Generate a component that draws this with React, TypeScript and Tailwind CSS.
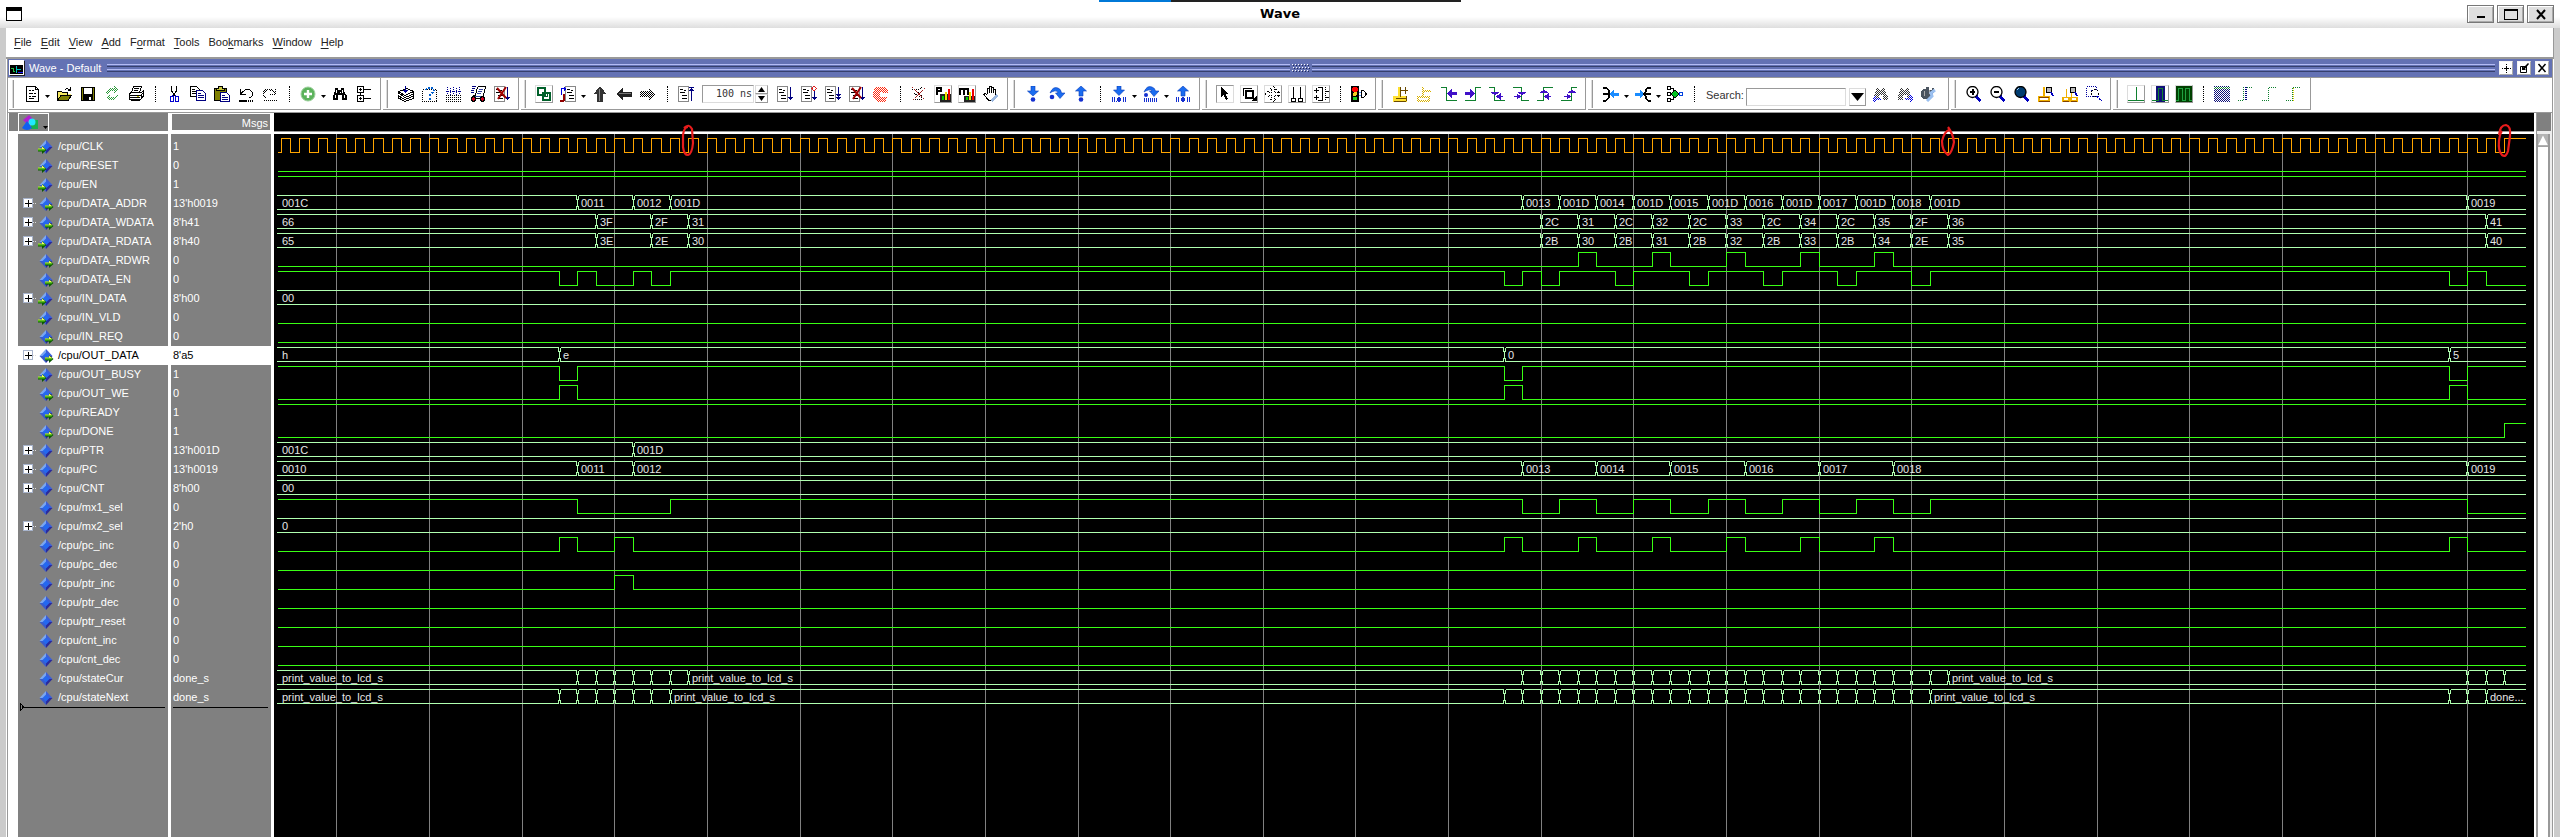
import React from "react";
import type { ReactNode } from "react";

/* ---------- waveform data ---------- */

type Change = [number, string];
type Port = "in" | "out" | "none";
type Signal = {
  name: string;
  value: string;
  port: Port;
  kind: "clock" | "bit" | "bus";
  initial?: 0 | 1;
  toggles?: number[];
  first?: string;
  changes?: Change[];
};

const range = (from: number, to: number) =>
  Array.from({ length: to - from + 1 }, (_, i) => from + i);

const blanks = (from: number, to: number): Change[] => range(from, to).map((k) => [k, ""]);

const memoryTimes = [14, 17, 19, 65, 67, 69, 71, 73, 75, 77, 79, 81, 83, 85, 87, 116];
const at = (times: number[], labels: string): Change[] =>
  labels.split(" ").map((label, i) => [times[i], label]);

const bit = (name: string, value: string, port: Port, initial: 0 | 1, toggles: number[] = []): Signal => ({
  name, value, port, kind: "bit", initial, toggles,
});
const bus = (name: string, value: string, port: Port, first: string, changes: Change[] = []): Signal => ({
  name, value, port, kind: "bus", first, changes,
});

const signals: Signal[] = [
  { name: "/cpu/CLK", value: "1", port: "in", kind: "clock" },
  bit("/cpu/RESET", "0", "in", 0),
  bit("/cpu/EN", "1", "in", 1),
  bus("/cpu/DATA_ADDR", "13'h0019", "out", "001C",
    at([13, 16, 18, 64, 66, 68, 70, 72, 74, 76, 78, 80, 82, 84, 86, 115],
      "0011 0012 001D 0013 001D 0014 001D 0015 001D 0016 001D 0017 001D 0018 001D 0019")),
  bus("/cpu/DATA_WDATA", "8'h41", "out", "66", at(memoryTimes, "3F 2F 31 2C 31 2C 32 2C 33 2C 34 2C 35 2F 36 41")),
  bus("/cpu/DATA_RDATA", "8'h40", "in", "65", at(memoryTimes, "3E 2E 30 2B 30 2B 31 2B 32 2B 33 2B 34 2E 35 40")),
  bit("/cpu/DATA_RDWR", "0", "out", 0, [67, 68, 71, 72, 75, 76, 79, 80, 83, 84]),
  bit("/cpu/DATA_EN", "0", "out", 1,
    [12, 13, 14, 16, 17, 18, 63, 64, 65, 66, 69, 70, 73, 74, 77, 78, 81, 82, 85, 86, 114, 115, 116]),
  bus("/cpu/IN_DATA", "8'h00", "in", "00"),
  bit("/cpu/IN_VLD", "0", "in", 0),
  bit("/cpu/IN_REQ", "0", "out", 0),
  bus("/cpu/OUT_DATA", "8'a5", "out", "h", [[12, "e"], [63, "0"], [114, "5"]]),
  bit("/cpu/OUT_BUSY", "1", "in", 1, [12, 13, 63, 64, 114, 115]),
  bit("/cpu/OUT_WE", "0", "out", 0, [12, 13, 63, 64, 114, 115]),
  bit("/cpu/READY", "1", "out", 1),
  bit("/cpu/DONE", "1", "out", 0, [117]),
  bus("/cpu/PTR", "13'h001D", "none", "001C", [[16, "001D"]]),
  bus("/cpu/PC", "13'h0019", "none", "0010",
    at([13, 16, 64, 68, 72, 76, 80, 84, 115], "0011 0012 0013 0014 0015 0016 0017 0018 0019")),
  bus("/cpu/CNT", "8'h00", "none", "00"),
  bit("/cpu/mx1_sel", "0", "none", 1, [13, 18, 64, 66, 68, 70, 72, 74, 76, 78, 80, 82, 84, 86, 115]),
  bus("/cpu/mx2_sel", "2'h0", "none", "0"),
  bit("/cpu/pc_inc", "0", "none", 0, [12, 13, 15, 16, 63, 64, 67, 68, 71, 72, 75, 76, 79, 80, 83, 84, 114, 115]),
  bit("/cpu/pc_dec", "0", "none", 0),
  bit("/cpu/ptr_inc", "0", "none", 0, [15, 16]),
  bit("/cpu/ptr_dec", "0", "none", 0),
  bit("/cpu/ptr_reset", "0", "none", 0),
  bit("/cpu/cnt_inc", "0", "none", 0),
  bit("/cpu/cnt_dec", "0", "none", 0),
  bus("/cpu/stateCur", "done_s", "none", "print_value_to_lcd_s", [
    ...blanks(13, 18), [19, "print_value_to_lcd_s"], ...blanks(64, 86), [87, "print_value_to_lcd_s"], ...blanks(115, 117),
  ]),
  bus("/cpu/stateNext", "done_s", "none", "print_value_to_lcd_s", [
    ...blanks(12, 17), [18, "print_value_to_lcd_s"], ...blanks(63, 85), [86, "print_value_to_lcd_s"], ...blanks(114, 115), [116, "done..."],
  ]),
];

const selected = "/cpu/OUT_DATA";
const expandable = (s: Signal) => s.kind === "bus" && !s.name.includes("state");

/* ---------- waveform drawing ---------- */

const PERIOD = 18.53;
const ORIGIN = 62.3;
const START = 4;
const END = 2252;
const ROW = 19;
const timeX = (k: number) => Math.round(ORIGIN + PERIOD * k);

function bitPath(row: number, initial: number, toggles: number[]) {
  const y = (level: number) => 4.5 + row * ROW + (level ? 0 : 14);
  let level = initial;
  let d = `M${START} ${y(level)}`;
  toggles.forEach((k) => {
    d += `H${timeX(k) + 0.5}`;
    level = level ? 0 : 1;
    d += `V${y(level)}`;
  });
  return d + `H${END}`;
}

function busPath(row: number, changes: Change[]) {
  const top = 4.5 + row * ROW;
  const low = top + 14;
  let from = START - 1;
  let d = "";
  changes.forEach(([k]) => {
    const x = timeX(k) + 0.5;
    d += `M${from} ${top}H${x - 1}V${top + 4}M${from} ${low}H${x - 1}V${low - 4}`;
    d += `M${x} ${top + 3}V${low - 3}M${x + 1} ${top + 4}V${top}M${x + 1} ${low - 4}V${low}`;
    from = x + 1;
  });
  return d + `M${from} ${top}H${END}M${from} ${low}H${END}`;
}

function Waves() {
  const clock = range(-6, 234).map((h) => h / 2).filter((k) => timeX(k) > START && timeX(k) < END);
  return (
    <svg className="block h-full w-full" role="img" aria-label="Waveforms">
      <g shapeRendering="crispEdges" fill="none" strokeWidth="1">
        <g stroke="#808080">
          {range(0, 23).map((n) => (
            <line key={n} x1={timeX(n * 5) + 0.5} x2={timeX(n * 5) + 0.5} y1="0" y2="100%" />
          ))}
        </g>
        {signals.map((s, row) => {
          if (s.kind === "clock") return <path key={s.name} stroke="#ffa500" d={bitPath(row, 0, clock)} />;
          if (s.kind === "bit") return <path key={s.name} stroke="#39ff14" d={bitPath(row, s.initial ?? 0, s.toggles ?? [])} />;
          return <path key={s.name} stroke="#b0ffb0" d={busPath(row, s.changes ?? [])} />;
        })}
      </g>
      <g fill="#e6e6e6" className="text-[11px]">
        {signals.map((s, row) =>
          s.kind === "bus" ? (
            <g key={s.name}>
              <text x={START + 4} y={16 + row * ROW}>{s.first}</text>
              {(s.changes ?? []).filter((c) => c[1]).map(([k, label]) => (
                <text key={k} x={timeX(k) + 4} y={16 + row * ROW}>{label}</text>
              ))}
            </g>
          ) : null,
        )}
      </g>
    </svg>
  );
}

/* ---------- icons ---------- */

const Icon = ({ children, dim }: { children: ReactNode; dim?: boolean }) => (
  <svg viewBox="0 0 16 16" className="size-4 shrink-0" shapeRendering="crispEdges" fill="none" stroke="#000" aria-hidden="true">
    {dim ? <g mask="url(#checker)">{children}</g> : children}
  </svg>
);

const Page = ({ x = 0 }: { x?: number }) => (
  <g transform={`translate(${x} 0)`}>
    <path d="M.5 .5H10.5V15.5H.5Z" fill="#fff" stroke="#888" />
    <path d="M2 3.5H5M2 6.5H7M4 9.5H9M4 12.5H9M6 4.5H8" />
  </g>
);
const ArrowDown = ({ x = 13 }: { x?: number }) => (
  <path d={`M${x + 0.5} 1V14M${x - 2} 11.5H${x + 3}M${x - 1} 12.5H${x + 2}M${x} 13.5H${x + 1}`} stroke="#000080" />
);
const Cross = () => <path d="M3 2L12 12M12 1L4 13" stroke="#a00000" strokeWidth="2" shapeRendering="auto" />;
const binocularShape = "M3 2H6V4H9V2H12V5L15 10V14H10V9H6V14H1V10L3 5Z";

const icons = {
  doc: <Icon><path d="M2.5 .5H11.5L14.5 3.5V15.5H2.5Z" fill="#fff" /><path d="M11.5 1V3.5H14M5 4.5H7M8 4.5H10M5 7.5H9M10 7.5H12M5 10.5H7M8 10.5H12M5 12.5H10" /></Icon>,
  open: <Icon><path d="M1 5H5L6 6H11V8H15L11 14H1Z" fill="#f5e960" stroke="none" /><path d="M1.5 13.5V5.5H5.5L6.5 6.5H11.5V9" /><path d="M1.5 14.5L5 9.5H15.5L12 14.5Z" fill="#808000" /><path d="M9 3.5H10M10 2.5H12M12 3.5H14M14.5 1V5M12 4.5H15" /></Icon>,
  save: <Icon><path d="M1.5 1.5H14.5V14.5H1.5Z" fill="#808000" /><path d="M4 2H12V8H4Z" fill="#fff" stroke="none" /><path d="M3 9H13V15H3Z" fill="#000" stroke="none" /><path d="M9 11H11V14H9Z" fill="#fff" stroke="none" /><path d="M3.5 2V8.5H12.5V2" /></Icon>,
  refresh: <Icon dim><path d="M1 6L5 2H10V0L14 4L10 8V5H6L4 8ZM15 9L11 14H6V16L2 12L6 8V11H10L12 9Z" fill="#2c9a3a" stroke="none" /></Icon>,
  print: <Icon><path d="M5.5 .5H13.5L11.5 6.5H3.5Z" fill="#fff" /><path d="M6 2.5H11M5.5 4.5H10" /><path d="M1.5 7.5L3.5 6.5H13.5L15.5 5V10L12.5 13.5H1.5Z" fill="#fff" /><path d="M2 9.5H13L15 7M2 11.5H12M3 14.5H12M13.5 9V13" /><path d="M9 10.5H11" stroke="#c8c800" /></Icon>,
  cut: <Icon><path d="M5.5 0V5L9.5 10M10.5 0V5L6.5 10" /><path d="M6.5 8.5V10.5H4.5V15.5H7.5V10M9.5 8.5V10.5M9 10.5H12.5V15.5H9.5V10" stroke="#0000d0" /></Icon>,
  copy: <Icon><path d="M.5 .5H6.5L9.5 3.5V10.5H.5Z" fill="#fff" /><path d="M2 3.5H5M2 5.5H7M2 7.5H7" /><path d="M6.5 4.5H12.5L15.5 7.5V14.5H6.5Z" fill="#fff" stroke="#000080" /><path d="M8 7.5H11M8 9.5H14M8 11.5H14" stroke="#000080" /></Icon>,
  paste: <Icon><path d="M.5 2.5H12.5V14.5H.5Z" fill="#808000" /><path d="M4.5 .5H8.5V2.5H10.5V4.5H2.5V2.5H4.5Z" fill="#c8c840" /><path d="M6.5 6.5H12.5L15.5 9.5V15.5H6.5Z" fill="#fff" stroke="#000080" /><path d="M8 9.5H11M8 11.5H14M8 13.5H14" stroke="#000080" /></Icon>,
  undo: <Icon><path d="M2.5 3V8.5H8M3 7.5L7.5 3.5H11.5L14.5 6.5V9.5L11.5 12" /><path d="M1 14.5H9" strokeWidth="2" /><path d="M10 14.5H15" strokeDasharray="1 1" strokeWidth="2" /></Icon>,
  redo: <Icon dim><path d="M13.5 3V8.5H8M13 7.5L8.5 3.5H4.5L1.5 6.5V9.5L4.5 12M1 14.5H15" strokeWidth="1.6" /></Icon>,
  plus: <Icon><g shapeRendering="auto"><circle cx="8" cy="8" r="7" fill="#5cb35c" stroke="#9ccf9c" /><path d="M8 4V12M4 8H12" stroke="#fff" strokeWidth="2.4" /></g></Icon>,
  find: <Icon><path d={binocularShape} fill="#000" stroke="none" /><path d="M4.5 4V7M10.5 4V7M3.5 9V12M12.5 9V12M8 6V7" stroke="#fff" /></Icon>,
  tree: <Icon><path d="M1.5 .5H7.5V6.5H1.5ZM1.5 9.5H7.5V15.5H1.5ZM3 3.5H6M4.5 2V5M3 12.5H6M4.5 11V14M8 3.5H15M8 12.5H15M4.5 7V9" /></Icon>,
  layers: <Icon><path d="M.5 5.5L9 2.5L15.5 5.5L7 9.5Z" fill="#fff" /><path d="M.5 5.5V7L7 11.5L15.5 8V6M.5 9V10L7 13.5L15.5 10V9M.5 11V12L7 15.5L15.5 12.5V11" /><path d="M7.5 0V7M5 4.5H10M6 5.5H9M7 6.5H8" stroke="#000090" strokeWidth="1.4" /></Icon>,
  query: <Icon><path d="M.5 3.5H14.5V15.5H.5Z" strokeDasharray="1 1" /><path d="M4 4L5 2H10L11.5 4V6L8 9V11M8 12V15" stroke="#0060d0" strokeDasharray="2 1" strokeWidth="2" /></Icon>,
  grid: <Icon><path d="M1.5 1V8M4.5 2V9M7.5 1V8M10.5 2V9M13.5 1V8M0 5.5H15" stroke="#000090" strokeDasharray="1 1" /><path d="M0 9.5H15M0 11.5H15M0 13.5H15M0 15.5H15" strokeDasharray="1 1" /></Icon>,
  car: <Icon><path d="M2 .5H6M2 2.5H5M1 4.5H4M1 6.5H4" stroke="#000080" /><path d="M7.5 1.5L8.5 .5H15.5L13.5 9.5L14.5 12.5H1.5L3.5 9.5H5.5Z" fill="#fff" /><path d="M9 3.5H13M8 5.5H12M7 7.5H11M2 10.5H12" stroke="#3040a0" /><circle cx="3.5" cy="13" r="2.2" fill="#d00020" /><circle cx="12.5" cy="13" r="2.2" fill="#d00020" /></Icon>,
  pageCross: <Icon><Page /><ArrowDown /><Cross /></Icon>,
  squares: <Icon><path d="M2 2H9V9H2ZM7 7H14V14H7Z" stroke="#00602a" strokeWidth="2" /><path d="M6 6H11V10H6Z" stroke="#00602a" /></Icon>,
  restart: <Icon><Page x={5} /><path d="M1.5 9V2.5H5M4 .5V5M5.5 1.5V4" stroke="#0000e0" /><path d="M3.5 8V15M0 14.5H4M3 8.5H5" stroke="#900000" strokeWidth="2" /></Icon>,
  up: <Icon><path d="M8 0L14.5 8H11V16H5V8H1.5Z" fill="#333" stroke="none" /><path d="M7 3V15" stroke="#888" /></Icon>,
  left: <Icon><path d="M0 8L7 2V5.5H16V10.5H7V14Z" fill="#222" stroke="none" /><path d="M3 7.5H15" stroke="#777" /></Icon>,
  right: <Icon dim><path d="M16 8L9 2V5H0V11H9V14Z" fill="#000" stroke="none" /></Icon>,
  runUp: <Icon><Page /><path d="M13.5 1V15M11 1.5H16M11 4.5H16M12 3.5H15" stroke="#000080" /></Icon>,
  run: <Icon><Page /><ArrowDown /></Icon>,
  runNext: <Icon><Page /><ArrowDown /><path d="M13 0L15.5 2.5L13 5L11 2.5Z" fill="#fff" stroke="#e02020" /></Icon>,
  runAll: <Icon><Page /><ArrowDown /><path d="M11 8.5H16M12 9.5H15" stroke="#000080" /></Icon>,
  stop: <Icon dim><path d="M4 1H11L14 4V6H9L8 5L6 7V9L8 11H14L12 15H5L1 11V5Z" fill="#ff2a10" stroke="#ff2a10" /></Icon>,
  profileOff: <Icon><path d="M1 3.5H8L12 1M3 7L7 10L12 11M2 13.5H12M5 5L10 9V14" strokeDasharray="1 1" /><path d="M1 1L14 14M14 2L1 15" stroke="#a02020" strokeDasharray="2 1" /></Icon>,
  profileP: <Icon><path d="M5 8H16V16H5Z" fill="#222" stroke="none" /><path d="M7 10H9V14H7Z" fill="#00d000" stroke="none" /><path d="M9.5 6H12V14H9.5Z" fill="#f0e000" stroke="none" /><path d="M12.5 3H15V14H12.5Z" fill="#f00000" stroke="none" /><path d="M2 9V2H6V5H2" strokeWidth="2" /></Icon>,
  profileM: <Icon><path d="M5 10H16V16H5Z" fill="#222" stroke="none" /><path d="M7 11H9V14H7Z" fill="#00d000" stroke="none" /><path d="M9.5 6H12V14H9.5Z" fill="#f0e000" stroke="none" /><path d="M12.5 3H15V14H12.5Z" fill="#f00000" stroke="none" /><path d="M1 9V3H5V9M5 3H9V9" strokeWidth="2" /></Icon>,
  hand: <Icon><path d="M4.5 8V2.5H6.5V7V.5H8.5V7V1.5H10.5V7V3.5H12.5V10L10 14.5H6L.5 8.5L2.5 7.5L4.5 9.5" fill="#fff" /><path d="M13 8L15 10L9 16L7 14Z" fill="#9bb8e0" stroke="none" /></Icon>,
  stepIn: <Icon><path d="M6 0H10V5H13.5L8 10L2.5 5H6Z" fill="#1a6cf0" stroke="#0a3cb8" strokeWidth=".6" shapeRendering="auto" /><circle cx="8" cy="13.5" r="2.3" fill="#1530d0" stroke="none" shapeRendering="auto" /></Icon>,
  stepOver: <Icon><g shapeRendering="auto"><path d="M1 7Q4 0 9 2Q12 3 12.5 7H16L11 12.5L6.5 7H9Q8 4 5.5 5Q3 5.5 1 7Z" fill="#1a6cf0" stroke="#0a3cb8" strokeWidth=".6" /><circle cx="3" cy="11" r="2.3" fill="#1530d0" stroke="none" /></g></Icon>,
  stepOut: <Icon><path d="M6 10H10V5H13.5L8 0L2.5 5H6Z" fill="#1a6cf0" stroke="#0a3cb8" strokeWidth=".6" shapeRendering="auto" /><circle cx="8" cy="13.5" r="2.3" fill="#1530d0" stroke="none" shapeRendering="auto" /></Icon>,
  stepInCur: <Icon><path d="M6 0H10V4H13.5L8 9.5L2.5 4H6Z" fill="#1a6cf0" stroke="#0a3cb8" strokeWidth=".6" shapeRendering="auto" /><path d="M1.5 11V16M3.5 11V16M12.5 11V16M14.5 11V16M5.5 15V16" stroke="#1530d0" /><circle cx="8" cy="13.5" r="2.3" fill="#1530d0" stroke="none" /></Icon>,
  stepOverCur: <Icon><g shapeRendering="auto"><path d="M1 6Q4 -1 9 1Q12 2 12.5 5H16L11 10.5L6.5 5H9Q8 3 5.5 4Q3 4.5 1 6Z" fill="#1a6cf0" stroke="#0a3cb8" strokeWidth=".6" /><circle cx="3" cy="9" r="2" fill="#1530d0" stroke="none" /></g><path d="M1 14H15" stroke="#1530d0" strokeWidth="4" strokeDasharray="1 1" /></Icon>,
  stepOutCur: <Icon><path d="M6 10H10V5H13.5L8 0L2.5 5H6Z" fill="#1a6cf0" stroke="#0a3cb8" strokeWidth=".6" shapeRendering="auto" /><path d="M1.5 11V16M3.5 11V16M12.5 11V16M14.5 11V16" stroke="#1530d0" /><circle cx="8" cy="13.5" r="2.3" fill="#1530d0" stroke="none" /></Icon>,
  pointer: <Icon><path d="M4 1L4 11L6.5 9L9 14L11 13L8.5 8H12Z" fill="#000" stroke="none" /></Icon>,
  zoomMode: <Icon><path d="M2.5 10V2.5H11" /><path d="M5 5H12V12H5Z" strokeWidth="2" /><path d="M10 15H16V9Z" fill="#000" stroke="none" /></Icon>,
  pan: <Icon><path d="M8 0L11 3H9.5V6.5H13V5L16 8L13 11V9.5H9.5V13H11L8 16L5 13H6.5V9.5H3V11L0 8L3 5V6.5H6.5V3H5Z" strokeDasharray="1 1" /></Icon>,
  cursors: <Icon><path d="M4.5 1V12M11.5 1V12M2.5 12.5H6.5V15.5H2.5ZM9.5 12.5H13.5V15.5H9.5Z" /></Icon>,
  edit: <Icon><path d="M1 4.5H6M3.5 2V7M1 11.5H6M3.5 9V14M5 1.5H9.5V14.5H5" /><path d="M12.5 1V15" strokeDasharray="1 1" /><path d="M13 5.5H16M13 11.5H16" /></Icon>,
  traffic: <Icon><path d="M0 0H8V16H0Z" fill="#000" stroke="none" /><circle cx="4" cy="3.5" r="2.8" fill="#ff0000" stroke="none" /><circle cx="4" cy="8" r="2" fill="#f5d020" stroke="none" /><circle cx="4" cy="12.5" r="2" fill="#20d020" stroke="none" /><path d="M10.5 4.5H12.5L15.5 8L12.5 11.5H10.5Z" /><path d="M8 6.5H10M8 9.5H10" stroke="#60a0ff" /></Icon>,
  addCursor: <Icon><path d="M6.5 1V12M1.5 11.5H12.5V14.5H1.5Z" stroke="#ffe030" strokeWidth="3" /><path d="M7.5 1V11M2.5 12.5H12.5M1 15H13M13 10V15M8 4.5H15M12.5 1V8" stroke="#6b4a00" /></Icon>,
  removeCursor: <Icon dim><path d="M6 1V12M1 11H12V15H1ZM7 5H14" stroke="#d8b000" strokeWidth="2.5" /></Icon>,
  prevEdge: <Icon><path d="M0 1.5H5.5V14.5H16" stroke="#108030" /><path d="M7 7.5H16" stroke="#4010c8" strokeWidth="3" /><path d="M6 7.5L10.5 3V12Z" fill="#4010c8" stroke="none" /></Icon>,
  nextEdge: <Icon><path d="M0 14.5H10.5V1.5H16" stroke="#108030" /><path d="M0 7.5H7" stroke="#4010c8" strokeWidth="3" /><path d="M9.5 7.5L5 3V12Z" fill="#4010c8" stroke="none" /></Icon>,
  prevFall: <Icon><path d="M0 1.5H5.5V14.5H16" stroke="#108030" /><path d="M3 6.5H9L6 9ZM8 10.5L11 8V13ZM10 10.5H14" fill="#4010c8" stroke="#4010c8" /></Icon>,
  nextFall: <Icon><path d="M0 1.5H8.5V14.5H16" stroke="#108030" /><path d="M6 6.5H12L9 9ZM7 10.5L4 8V13ZM1 10.5H5" fill="#4010c8" stroke="#4010c8" /></Icon>,
  prevRise: <Icon><path d="M0 14.5H6.5V1.5H16" stroke="#108030" /><path d="M4 6.5H10L7 4ZM8 10.5L11 8V13ZM10 10.5H14" fill="#4010c8" stroke="#4010c8" /></Icon>,
  nextRise: <Icon><path d="M0 14.5H10.5V1.5H16" stroke="#108030" /><path d="M8 6.5H14L11 4ZM9 10.5L6 8V13ZM3 10.5H7" fill="#4010c8" stroke="#4010c8" /></Icon>,
  collapse: <Icon><path d="M0 1.5H3L5.5 4V6L7 8L5.5 10V12L3 14.5H0M0 8H6" strokeWidth="2" /><path d="M6 8L11 3.5V6.5H16V9.5H11V12.5Z" fill="#1a8cff" stroke="none" /></Icon>,
  expand: <Icon><path d="M0 6.5H5V3.5L10 8L5 12.5V9.5H0Z" fill="#1a8cff" stroke="none" /><path d="M16 1.5H13L10.5 4V6L9 8L10.5 10V12L13 14.5H16M10 8H16" strokeWidth="2" /></Icon>,
  expandAll: <Icon><path d="M.5 .5H3.5V3.5H.5ZM.5 6.5H3.5V9.5H.5ZM.5 12.5H3.5V15.5H.5ZM4 2.5H6.5V13.5H4M4 8H13" /><path d="M4 8L8 4L12 8L8 12Z" fill="#00c020" /><path d="M12.5 6.5H15.5V9.5H12.5Z" stroke="#0040e0" /></Icon>,
  findPrev: <Icon dim><path d={binocularShape} fill="#333" stroke="none" /><path d="M0 13H8M3 10L0 13L3 16" stroke="#0000e0" strokeWidth="2" /></Icon>,
  findNext: <Icon dim><path d={binocularShape} fill="#333" stroke="none" /><path d="M8 13H16M13 10L16 13L13 16" stroke="#0000e0" strokeWidth="2" /></Icon>,
  findOptions: <Icon><path d="M2 3H5V1H8V4H11V2H13V6L10 13H2L0 10V6Z" fill="#4b5560" stroke="none" /><path d="M3.5 5V10M8.5 4V8" stroke="#aaa" /><path d="M14 4L10 7L11 10L6 15" stroke="#9bc0f0" strokeWidth="3" shapeRendering="auto" /></Icon>,
  zoomIn: <Icon><path d="M10 10L14.5 15" stroke="#0000c0" strokeWidth="3" /><g shapeRendering="auto"><circle cx="6.500" cy="6" r="5.5" fill="#fff" strokeWidth="1.3" /></g><path d="M6.5 3V9M4 6H9" strokeWidth="2" /></Icon>,
  zoomOut: <Icon><path d="M10 10L14.5 15" stroke="#0000c0" strokeWidth="3" /><g shapeRendering="auto"><circle cx="6.500" cy="6" r="5.5" fill="#fff" strokeWidth="1.3" /></g><path d="M4 6H9" strokeWidth="2" /></Icon>,
  zoomFull: <Icon><path d="M10 10L14.5 15" stroke="#0000c0" strokeWidth="3" /><g shapeRendering="auto"><circle cx="6.500" cy="6" r="5.5" fill="#003c70" strokeWidth="1.3" /></g><path d="M3 4L5 2" stroke="#a0c8f0" /></Icon>,
  zoomCursor: <Icon><path d="M5.5 1V11M1 11H11V15H1Z" stroke="#f0b000" strokeWidth="2" /><path d="M1 15.5H12M1 11.5H11" stroke="#804000" /><circle cx="11" cy="4" r="3" fill="#bbb" /><path d="M13 6L15 10" stroke="#0000c0" strokeWidth="2" /></Icon>,
  zoomPair: <Icon><path d="M4.5 3V11M9.5 3V11M1 11.5H7V15H1ZM9 11.5H15V15H9Z" stroke="#f0b000" strokeWidth="1.5" /><path d="M1 15.5H7M9 15.5H15" stroke="#804000" /><circle cx="11" cy="4" r="3" fill="#bbb" /><path d="M13 6L15 10" stroke="#0000c0" strokeWidth="2" /></Icon>,
  zoomArea: <Icon><path d="M.5 .5H10.5V10.5H.5ZM4.5 4.5H12" stroke="#0000a0" strokeDasharray="1 1" /><circle cx="9" cy="7" r="3.5" fill="#fff" strokeDasharray="2 1" /><path d="M11 10L15 15" stroke="#0000c0" strokeWidth="2" strokeDasharray="2 1" /></Icon>,
  waveLine: <Icon><path d="M0 14.5H16M8.5 1V14" stroke="#108030" /></Icon>,
  waveBlue: <Icon><path d="M4 0H13V16H4Z" fill="#101078" stroke="none" /><path d="M0 14.5H6.5V2.5H10.5V14.5H16" stroke="#108030" /></Icon>,
  waveGreen: <Icon><path d="M0 0H16V16H0Z" fill="#004000" stroke="none" /><path d="M0 14.5H2.5V2.5H6.5V14.5H9.5V2.5H13.5V14.5H16" stroke="#20a040" /></Icon>,
  areaDim: <Icon dim><path d="M0 0H16V16H0Z" fill="#101078" stroke="none" /><path d="M0 2H16" stroke="#108030" strokeWidth="2" /></Icon>,
  edgeDim: <Icon><path d="M0 14.5H5.5V1.5H15" stroke="#108030" strokeDasharray="1 1" /><path d="M7.5 1V15" stroke="#000080" strokeWidth="2" strokeDasharray="1 1" /></Icon>,
  riseDim: <Icon><path d="M0 14.5H6.5V1.5H15" stroke="#108030" strokeDasharray="1 1" /></Icon>,
  riseMark: <Icon><path d="M0 14.5H6.5V1.5H15" stroke="#108030" strokeDasharray="1 1" /><path d="M7.5 2V15" stroke="#e0d000" strokeDasharray="1 1" /></Icon>,
};

type IconName = keyof typeof icons;

/* ---------- toolbar parts ---------- */

const Tool = ({ icon, frame }: { icon: IconName; frame?: "raised" | "sunken" }) => (
  <button
    type="button"
    aria-label={icon}
    className={
      "mx-[3px] flex h-[18px] w-[18px] items-center justify-center border " +
      (frame === "raised"
        ? "border-[#dcdcdc] border-r-[#999] border-b-[#999]"
        : frame === "sunken"
          ? "border-[#dcdcdc] border-t-[#999] border-l-[#999]"
          : "border-transparent")
    }
  >
    {icons[icon]}
  </button>
);

const MenuTool = ({ icon }: { icon: IconName }) => (
  <button type="button" aria-label={icon} className="flex w-8 items-center gap-[5px] pl-1">
    {icons[icon]}
    <svg viewBox="0 0 5 3" className="mt-[5px] h-[3px] w-[5px]" aria-hidden="true"><path d="M0 0H5L2.5 3Z" /></svg>
  </button>
);

const Divider = () => (
  <span className="flex w-[14px] justify-center"><span className="h-4 border-l border-dotted border-black" /></span>
);

const Group = ({ children }: { children: ReactNode }) => (
  <div className="flex h-8 items-center border-r border-b border-r-[#999] border-b-[#999] pr-1">
    <span className="mr-[6px] ml-[3px] h-7 w-[2px] border-l border-r border-l-[#dcdcdc] border-r-[#999]" />
    {children}
  </div>
);

const tools = (...names: IconName[]) => names.map((n) => <Tool key={n} icon={n} />);

function Toolbar() {
  return (
    <div className="flex h-[34px] shrink-0 items-start gap-[2px] border-t border-[#999] bg-white pl-px whitespace-nowrap">
      <Group>
        <MenuTool icon="doc" />
        {tools("open", "save", "refresh", "print")}
        <Divider />
        {tools("cut", "copy", "paste", "undo", "redo")}
        <Divider />
        <MenuTool icon="plus" />
        {tools("find", "tree")}
      </Group>
      <Group>{tools("layers", "query", "grid", "car", "pageCross")}</Group>
      <Group>
        <Tool icon="squares" frame="raised" />
        <MenuTool icon="restart" />
        {tools("up", "left", "right")}
        <Divider />
        <Tool icon="runUp" />
        <input
          aria-label="Run length"
          defaultValue="100 ns"
          className="ml-1 h-[18px] w-[52px] border border-[#dcdcdc] border-t-[#999] border-l-[#999] bg-white pr-px text-right font-['DejaVu_Sans_Mono',monospace] text-[10px] text-[#333] outline-none"
        />
        <span className="mr-[5px] ml-px flex flex-col">
          <button type="button" aria-label="Increase" className="flex h-[9px] w-[13px] items-center justify-center border border-[#dcdcdc] border-r-[#999] border-b-[#999]">
            <svg viewBox="0 0 7 5" className="h-[5px] w-[7px]"><path d="M0 5H7L3.5 0Z" /></svg>
          </button>
          <button type="button" aria-label="Decrease" className="flex h-[9px] w-[13px] items-center justify-center border border-[#dcdcdc] border-r-[#999] border-b-[#999]">
            <svg viewBox="0 0 7 5" className="h-[5px] w-[7px]"><path d="M0 0H7L3.5 5Z" /></svg>
          </button>
        </span>
        {tools("run", "runNext", "runAll", "pageCross", "stop")}
        <Divider />
        <Tool icon="profileOff" />
        <Tool icon="profileP" frame="raised" />
        <Tool icon="profileM" frame="raised" />
        <Tool icon="hand" />
      </Group>
      <Group>
        {tools("stepIn", "stepOver", "stepOut")}
        <Divider />
        <MenuTool icon="stepInCur" />
        <MenuTool icon="stepOverCur" />
        <Tool icon="stepOutCur" />
      </Group>
      <Group>
        <Tool icon="pointer" frame="sunken" />
        <Tool icon="zoomMode" frame="raised" />
        <Tool icon="pan" frame="raised" />
        <Tool icon="cursors" frame="raised" />
        <Tool icon="edit" frame="raised" />
        <Divider />
        <Tool icon="traffic" />
      </Group>
      <Group>
        {tools("addCursor", "removeCursor", "prevEdge", "nextEdge", "prevFall", "nextFall", "prevRise", "nextRise")}
      </Group>
      <Group>
        <MenuTool icon="collapse" />
        <MenuTool icon="expand" />
        <Tool icon="expandAll" />
        <Divider />
        <label htmlFor="search" className="mr-[2px] ml-[5px] w-[38px] pt-[3px] text-[11px] text-[#333]">Search:</label>
        <input id="search" className="mt-[6px] h-[18px] w-[100px] border border-[#dcdcdc] border-t-[#999] border-l-[#999] bg-white px-1 text-[11px] outline-none" />
        <button type="button" aria-label="Search history" className="mx-[3px] mt-[6px] flex h-[18px] w-[17px] items-center justify-center border border-[#dcdcdc] border-r-[#999] border-b-[#999]">
          <svg viewBox="0 0 13 8" className="h-2 w-[13px]"><path d="M0 0H13L6.5 8Z" /></svg>
        </button>
        <span className="flex pr-[3px]">{tools("findPrev", "findNext", "findOptions")}</span>
      </Group>
      <Group>{tools("zoomIn", "zoomOut", "zoomFull", "zoomCursor", "zoomPair", "zoomArea")}</Group>
      <Group>
        <Tool icon="waveLine" frame="raised" />
        <Tool icon="waveBlue" frame="raised" />
        <Tool icon="waveGreen" frame="raised" />
        <Divider />
        {tools("areaDim", "edgeDim", "riseDim", "riseMark")}
      </Group>
    </div>
  );
}

/* ---------- window chrome ---------- */

const windowButton =
  "flex h-[18px] w-[27px] items-center justify-center border border-[#777] bg-[#dedede] shadow-[inset_1px_1px_0_#fff,inset_-1px_-1px_0_#aaa]";

function TitleBar() {
  return (
    <header className="relative grid h-7 shrink-0 grid-cols-[1fr_auto_1fr] items-center bg-gradient-to-b from-white from-60% to-[#dedede] px-[6px]">
      <div className="absolute inset-x-0 top-0 flex justify-center">
        <span className="h-[2px] w-[72px] bg-[#0078d7]" />
        <span className="h-[2px] w-[290px] bg-[#222]" />
      </div>
      <button type="button" aria-label="Window menu" className="h-[14px] w-4 border border-t-4 border-black bg-white" />
      <h1 className="font-['DejaVu_Sans',sans-serif] text-[13px] leading-[26px] font-bold">Wave</h1>
      <div className="flex justify-end gap-[3px]">
        <button type="button" aria-label="Minimize" className={windowButton}>
          <svg viewBox="0 0 12 12" className="size-3"><path d="M2 8H10V10H2Z" /></svg>
        </button>
        <button type="button" aria-label="Maximize" className={windowButton}>
          <svg viewBox="0 0 14 12" className="h-3 w-[14px]" shapeRendering="crispEdges"><path d="M.5 2.5V11.5H13.5V2.5" fill="none" stroke="#000" /><path d="M0 1H14V3H0Z" /></svg>
        </button>
        <button type="button" aria-label="Close" className={windowButton}>
          <svg viewBox="0 0 12 12" className="size-3"><path d="M2 2L10 11M10 2L2 11" stroke="#000" strokeWidth="2" /></svg>
        </button>
      </div>
    </header>
  );
}

const menus: [string, string, string][] = [
  ["", "F", "ile"], ["", "E", "dit"], ["", "V", "iew"], ["", "A", "dd"], ["F", "o", "rmat"],
  ["", "T", "ools"], ["Boo", "k", "marks"], ["", "W", "indow"], ["", "H", "elp"],
];

function MenuBar() {
  return (
    <nav className="flex h-[31px] shrink-0 items-center gap-[9px] border-r border-b-2 border-[#999] bg-white pl-2 text-[11px] text-[#222]">
      {menus.map(([before, key, after]) => (
        <button type="button" key={before + key + after}>
          {before}<span className="underline underline-offset-2">{key}</span>{after}
        </button>
      ))}
    </nav>
  );
}

const Groove = () => (
  <span className="flex flex-1 flex-col gap-[2px]">
    <span className="h-[3px] border-t border-b border-t-[#b4bcf4] border-b-[#36406e]" />
    <span className="h-[3px] border-t border-b border-t-[#b4bcf4] border-b-[#36406e]" />
  </span>
);

const paneButton = "flex h-[14px] w-[14px] items-center justify-center border border-[#f4f4f4] border-r-[#aaa] border-b-[#aaa] bg-white";

function PaneBar() {
  return (
    <div className="flex h-[18px] shrink-0 items-center bg-[#6472b4] pr-[3px] pl-px">
      <svg viewBox="0 0 16 16" className="size-4" shapeRendering="crispEdges" aria-hidden="true">
        <path d="M0 0H15V15H0Z" fill="#fff" /><path d="M1 5H14V14H1Z" /><path d="M15 1V15.5H1" fill="none" stroke="#222" />
        <path d="M2 8.5H4.5V11.5H6" stroke="#20c040" fill="none" /><path d="M7.5 6V13M7 9.5H12" stroke="#00c0c0" /><path d="M9 12.5H14" stroke="#2020ff" />
      </svg>
      <h2 className="mr-[6px] ml-1 text-[11px] leading-4 text-white">Wave - Default</h2>
      <Groove />
      <svg viewBox="0 0 18 9" className="mx-[2px] h-[9px] w-[18px]" shapeRendering="crispEdges" aria-hidden="true">
        {[0, 3, 6].map((y) => (
          <g key={y} strokeDasharray="1 2"><path d={`M${y === 3 ? 1 : 0} ${y + 0.5}H18`} stroke="#fff" /><path d={`M${y === 3 ? 2 : 1} ${y + 1.5}H18`} stroke="#222a55" /></g>
        ))}
      </svg>
      <Groove />
      <div className="ml-1 flex gap-1">
        <button type="button" aria-label="Move pane" className={paneButton}>
          <svg viewBox="0 0 10 10" className="size-[10px]" shapeRendering="crispEdges"><path d="M5.5 1V10M1 5.5H10" stroke="#000" strokeDasharray="1 1" /><path d="M4 5.500H7M5.500 4V7" stroke="#000" /></svg>
        </button>
        <button type="button" aria-label="Undock pane" className={paneButton}>
          <svg viewBox="0 0 10 10" className="size-[10px]"><path d="M1.5 3.5H7.5V9.5H1.5Z" fill="none" stroke="#000" /><path d="M3 7V3L7 7ZM4 5L9 0L10 1L5 7Z" /></svg>
        </button>
        <button type="button" aria-label="Close pane" className={paneButton}>
          <svg viewBox="0 0 10 10" className="size-[10px]"><path d="M1.5 1L8.5 9M8.5 1L1.5 9" stroke="#000" strokeWidth="1.5" /></svg>
        </button>
      </div>
    </div>
  );
}

/* ---------- signal list ---------- */

const SignalIcon = ({ port }: { port: Port }) => (
  <svg viewBox="0 0 18 16" className="h-4 w-[18px] shrink-0" aria-hidden="true">
    <path d="M9 1L2.5 8L9 8Z" fill="#7aa6f0" />
    <path d="M9 1L15.5 8L9 8Z" fill="#3c5ed8" />
    <path d="M9 15L2.5 8L9 8Z" fill="#3a5ccc" />
    <path d="M9 15L15.5 8L9 8Z" fill="#2a2a9c" />
    <path d="M9 4.5L12.5 8L9 11.5L5.5 8Z" fill="#2468f0" />
    {port !== "none" && (
      <g transform={port === "in" ? "translate(1 7)" : "translate(8 7)"}>
        <path d="M0 2.5H4V0L8.5 4L4 8V5.5H0Z" fill="#0a5a00" />
        <path d="M0 2.5H4V.5L7.5 3.5H0Z" fill="#f0ff60" />
        <path d="M0 3.5H7.5L6.5 4.5H0Z" fill="#50d010" />
      </g>
    )}
  </svg>
);

function SignalTable() {
  return (
    <table className="h-full w-[265px] shrink-0 table-fixed border-separate border-spacing-0 bg-[#808080] text-[11px] leading-[17px] text-white">
      <colgroup><col className="w-[162px]" /><col className="w-[103px]" /></colgroup>
      <thead>
        <tr className="h-[21px]">
          <th className="border-r-[3px] border-b-[3px] border-white p-0 text-left">
            <button type="button" aria-label="Signal filter" className="ml-[9px] flex h-[18px] w-[31px] items-end gap-1 border border-b-0 border-white pb-px pl-[3px]">
              <svg viewBox="0 0 17 15" className="h-[15px] w-[17px]" aria-hidden="true">
                <path d="M1 5L7 0L11 4L5 9Z" fill="#b020d0" /><path d="M9 5H16V14H9Z" fill="#18b050" /><circle cx="10" cy="7" r="3.5" fill="#20e8ff" /><path d="M5 6L10 13Q5 17 0 13Z" fill="#1060f0" />
              </svg>
              <svg viewBox="0 0 5 3" className="mb-px h-[3px] w-[5px]" aria-hidden="true"><path d="M0 0H5L2.5 3Z" /></svg>
            </button>
          </th>
          <th className="border-r-[3px] border-b-[3px] border-white p-0">
            <div className="h-[18px] border border-white pr-[2px] text-right leading-[19px] font-normal">Msgs</div>
          </th>
        </tr>
      </thead>
      <tbody>
        <tr className="h-[3px]">
          <td className="border-r-[3px] border-l-[9px] border-white p-0" />
          <td className="border-r-[3px] border-white p-0" />
        </tr>
        {signals.map((s) => {
          const on = s.name === selected;
          return (
            <tr key={s.name} className={on ? "h-[19px] bg-white text-black" : "h-[19px]"}>
              <td className="border-r-[3px] border-l-[9px] border-white p-0">
                <div className="flex h-[18px] items-center pl-[5px]">
                  {expandable(s) ? (
                    <button type="button" aria-label={"Expand " + s.name} className="flex w-[14px] items-center">
                      <svg viewBox="0 0 14 11" className="h-[11px] w-[14px]" shapeRendering="crispEdges" aria-hidden="true">
                        <path d="M.5 .5H9.5V9.5H.5Z" fill="#fff" stroke="#a8b4cc" /><path d="M2 5.5H9M5.5 2V9" stroke="#000" /><path d="M10 5.5H14" stroke="#ddd" strokeDasharray="1 1" />
                      </svg>
                    </button>
                  ) : (
                    <span className="w-[14px]" />
                  )}
                  <SignalIcon port={s.port} />
                  <span className="ml-[3px]">{s.name}</span>
                </div>
              </td>
              <td className="border-r-[3px] border-white p-0 pl-[2px]">{s.value}</td>
            </tr>
          );
        })}
        <tr>
          <td className="border-r-[3px] border-l-[9px] border-white p-0 align-top">
            <svg className="block h-1 w-full overflow-visible" shapeRendering="crispEdges" aria-hidden="true"><path d="M2.5 -3.5V3.5L5.5 0Z" fill="none" stroke="#000" /><line x1="5" x2="147" y1="0" y2="0" stroke="#000" /></svg>
          </td>
          <td className="border-r-[3px] border-white p-0 align-top">
            <svg className="block h-1 w-full overflow-visible" shapeRendering="crispEdges" aria-hidden="true"><line x1="2" x2="97" y1="0" y2="0" stroke="#000" /></svg>
          </td>
        </tr>
      </tbody>
    </table>
  );
}

/* ---------- page ---------- */

export default function App() {
  return (
    <div className="flex h-screen min-h-[740px] flex-col overflow-hidden bg-[#cbcbcb] font-['Liberation_Sans',sans-serif] text-black">
      <svg className="absolute size-0" aria-hidden="true">
        <defs>
          <pattern id="dots" width="2" height="2" patternUnits="userSpaceOnUse">
            <path d="M0 0H1V1H0ZM1 1H2V2H1Z" fill="#fff" />
          </pattern>
          <mask id="checker" maskUnits="userSpaceOnUse" x="0" y="0" width="16" height="16"><path d="M0 0H16V16H0Z" fill="url(#dots)" /></mask>
        </defs>
      </svg>
      <TitleBar />
      <main className="mx-[6px] flex min-h-0 flex-1 flex-col bg-white">
        <MenuBar />
        <section className="mx-px flex min-h-0 flex-1 flex-col border-r border-l border-[#999] bg-white">
          <PaneBar />
          <Toolbar />
          <div className="mt-px flex min-h-0 flex-1 border-t border-[#999] pl-px">
            <SignalTable />
            <div className="relative flex min-w-0 flex-1 flex-col bg-black">
              <div className="h-[21px] shrink-0 border-b-2 border-white shadow-[inset_0_-1px_0_#999]" />
              <div className="min-h-0 flex-1"><Waves /></div>
              <svg className="pointer-events-none absolute top-0 left-0 h-12 w-full" fill="none" stroke="#e81c1c" strokeWidth="2.2" strokeLinejoin="round" aria-hidden="true">
                <path d="M410 15Q415 10 418 16L419 30Q418 41 414 42Q410 42 409 34L409 22Q410 14 414 14" />
                <path d="M1674 14Q1679 21 1680 29Q1678 40 1674 42Q1668 38 1668 28Q1670 19 1675 17" />
                <path d="M2225 22Q2226 12 2232 12Q2237 13 2236 23L2234 38Q2232 45 2228 42Q2224 38 2225 28Q2226 20 2228 18" />
              </svg>
            </div>
            <div className="flex w-[18px] flex-col border-l-2 border-white bg-[#eee] shadow-[inset_1px_0_0_#999]">
              <div className="mx-px h-[18px] shrink-0 bg-[#808080]" />
              <div className="mt-[3px] mr-[2px] ml-px flex flex-1 flex-col border-r-2 border-l border-[#999] bg-white">
                <button type="button" aria-label="Scroll up" className="flex h-[13px] justify-center bg-[#b4b4b4]">
                  <svg viewBox="0 0 11 13" className="h-[13px] w-[11px]"><path d="M5.5 1L11 12H0Z" fill="#fff" /><path d="M0 12.5H11" stroke="#888" /></svg>
                </button>
              </div>
            </div>
          </div>
        </section>
      </main>
    </div>
  );
}
